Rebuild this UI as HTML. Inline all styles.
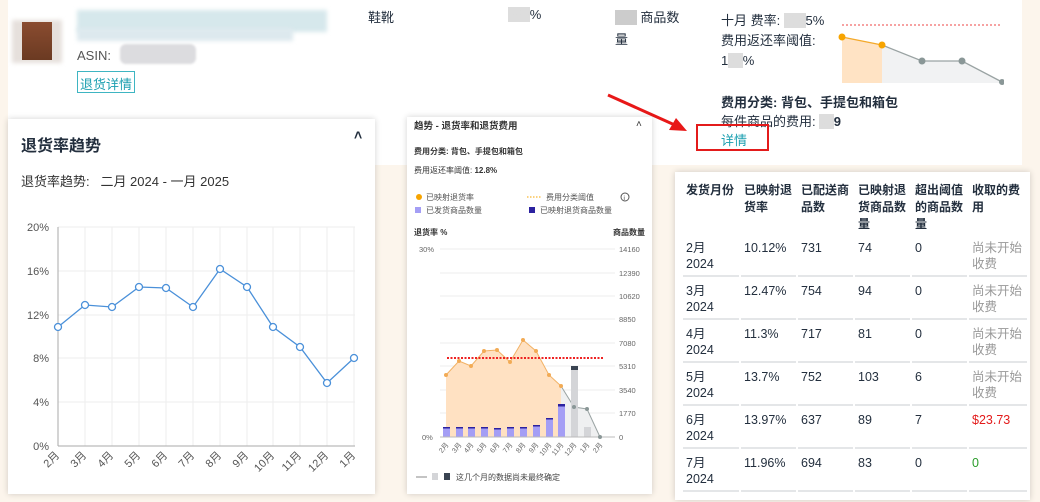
<!DOCTYPE html><html><head><meta charset="utf-8"><style>
*{margin:0;padding:0;box-sizing:border-box}
html,body{width:1040px;height:502px;overflow:hidden}
body{background:#fcf5ec;font-family:"Liberation Sans","Noto Sans CJK SC",sans-serif;color:#232f3e;position:relative}
.a{position:absolute;white-space:nowrap}
.t{font-size:13px}
.card{position:absolute;background:#fff;box-shadow:0 0 6px rgba(0,0,0,.18)}
table{border-collapse:separate;border-spacing:2px 0;font-size:12.5px;table-layout:fixed;width:340px}
td,th{vertical-align:top;text-align:left;padding:0 3px;line-height:17px;word-break:break-all}
th{font-weight:bold;font-size:12px;height:62px;padding-top:10px}
td{border-bottom:2px solid #e4e6e8;height:43px;padding-top:6px;line-height:16px}
.g{color:#999}
</style></head><body>
<div class="a" style="left:8px;top:0;width:1014px;height:165px;background:#fff"></div>
<div class="a" style="left:12px;top:20px;width:50px;height:43px;background:#e6e0dc;filter:blur(2px)"></div>
<div class="a" style="left:22px;top:22px;width:30px;height:38px;background:linear-gradient(#8a4c30,#6b3a22)"></div>
<div class="a" style="left:77px;top:10px;width:250px;height:22px;background:#d6e8ec;filter:blur(2px)"></div>
<div class="a" style="left:77px;top:28px;width:216px;height:13px;background:#dde9ee;filter:blur(2px)"></div>
<div class="a t" style="left:77px;top:48px;color:#555">ASIN:</div>
<div class="a" style="left:120px;top:44px;width:76px;height:20px;background:#dcdcdf;border-radius:6px;filter:blur(1px)"></div>
<div class="a" style="left:77px;top:71px;height:22px;border:1px solid #3eb5c2;color:#1b9fb0;font-size:13px;padding:2px 2px">退货详情</div>
<div class="a t" style="left:368px;top:7px">鞋靴</div>
<div class="a t" style="left:508px;top:7px"><span style="background:#ddd;color:#ddd">888</span>%</div>
<div class="a t" style="left:615px;top:7px;line-height:22px"><span style="background:#ccc;color:#ccc">888</span> 商品数<br>量</div>
<div class="a t" style="left:721px;top:11px;line-height:20px">十月 费率: <span style="background:#ddd;color:#ddd">888</span>5%<br>费用返还率阈值:<br>1<span style="background:#ddd;color:#ddd">88</span>%</div>
<svg class="a" style="left:838px;top:20px" width="166" height="66">
<line x1="4" y1="5" x2="164" y2="5" stroke="#e44" stroke-dasharray="2 2"/>
<polygon points="4,17 44,25 84,41 124,41 164,62 164,63 4,63" fill="#f1f2f3"/>
<polygon points="4,17 44,25 44,63 4,63" fill="#ffe3c4"/>
<polyline points="4,17 44,25" stroke="#f4a92a" fill="none" stroke-width="1.3"/>
<polyline points="44,25 84,41 124,41 164,62" stroke="#9aa3a3" fill="none" stroke-width="1.3"/>
<circle cx="4" cy="17" r="3.5" fill="#f7a400"/><circle cx="44" cy="25" r="3.5" fill="#f7a400"/>
<circle cx="84" cy="41" r="3.5" fill="#8a9797"/><circle cx="124" cy="41" r="3.5" fill="#8a9797"/><circle cx="164" cy="62" r="3" fill="#8a9797"/>
</svg>
<div class="a t" style="left:721px;top:93px;line-height:19px;font-weight:bold">费用分类: 背包、手提包和箱包<br><span style="font-weight:normal">每件商品的费用: </span><span style="background:#ddd;color:#ddd">88</span>9</div>
<div class="a" style="left:721px;top:130px;color:#1b9fb0;font-size:13px">详情</div>
<div class="a" style="left:696px;top:124px;width:73px;height:27px;border:2px solid #e31b1b"></div>
<svg class="a" style="left:605px;top:92px" width="90" height="45"><line x1="3" y1="3" x2="72" y2="34" stroke="#e81818" stroke-width="3"/><polygon points="82,39 64,38 71,26" fill="#e81818"/></svg>

<div class="card" style="left:8px;top:119px;width:367px;height:375px">
<div class="a" style="left:13px;top:13px;font-size:16px;font-weight:bold">退货率趋势</div>
<div class="a" style="left:346px;top:8px;font-size:14px;font-weight:bold">˄</div>
<div class="a t" style="left:13px;top:52px;color:#333">退货率趋势:&nbsp;&nbsp; 二月 2024 - 一月 2025</div>
</div>
<svg class="a" style="left:0;top:0" width="380" height="500" font-family="Liberation Sans" font-size="11" fill="#555">
<g stroke="#eee">
<line x1="58" y1="227" x2="355" y2="227"/><line x1="58" y1="271" x2="355" y2="271"/><line x1="58" y1="315" x2="355" y2="315"/><line x1="58" y1="358" x2="355" y2="358"/><line x1="58" y1="402" x2="355" y2="402"/>
<line x1="85" y1="227" x2="85" y2="446"/><line x1="112" y1="227" x2="112" y2="446"/><line x1="139" y1="227" x2="139" y2="446"/><line x1="166" y1="227" x2="166" y2="446"/><line x1="193" y1="227" x2="193" y2="446"/><line x1="220" y1="227" x2="220" y2="446"/><line x1="247" y1="227" x2="247" y2="446"/><line x1="273" y1="227" x2="273" y2="446"/><line x1="300" y1="227" x2="300" y2="446"/><line x1="327" y1="227" x2="327" y2="446"/><line x1="354" y1="227" x2="354" y2="446"/></g>
<line x1="58" y1="227" x2="58" y2="446" stroke="#aaa"/><line x1="58" y1="446" x2="355" y2="446" stroke="#aaa"/>
<g text-anchor="end"><text x="49" y="231">20%</text><text x="49" y="275">16%</text><text x="49" y="319">12%</text><text x="49" y="362">8%</text><text x="49" y="406">4%</text><text x="49" y="450">0%</text></g>
<polyline fill="none" stroke="#4a90d9" stroke-width="1.3" points="58,327 85,305 112,307 139,287 166,288 193,307 220,269 247,287 273,327 300,347 327,383 354,358"/>
<g fill="#fff" stroke="#4a90d9" stroke-width="1.3"><circle cx="58" cy="327" r="3.5"/><circle cx="85" cy="305" r="3.5"/><circle cx="112" cy="307" r="3.5"/><circle cx="139" cy="287" r="3.5"/><circle cx="166" cy="288" r="3.5"/><circle cx="193" cy="307" r="3.5"/><circle cx="220" cy="269" r="3.5"/><circle cx="247" cy="287" r="3.5"/><circle cx="273" cy="327" r="3.5"/><circle cx="300" cy="347" r="3.5"/><circle cx="327" cy="383" r="3.5"/><circle cx="354" cy="358" r="3.5"/></g>
<g text-anchor="end"><text transform="translate(60,456) rotate(-45)">2月</text><text transform="translate(87,456) rotate(-45)">3月</text><text transform="translate(114,456) rotate(-45)">4月</text><text transform="translate(141,456) rotate(-45)">5月</text><text transform="translate(168,456) rotate(-45)">6月</text><text transform="translate(195,456) rotate(-45)">7月</text><text transform="translate(222,456) rotate(-45)">8月</text><text transform="translate(249,456) rotate(-45)">9月</text><text transform="translate(275,456) rotate(-45)">10月</text><text transform="translate(302,456) rotate(-45)">11月</text><text transform="translate(329,456) rotate(-45)">12月</text><text transform="translate(356,456) rotate(-45)">1月</text></g>
</svg>

<div class="card" style="left:407px;top:117px;width:245px;height:377px"></div>
<svg class="a" style="left:407px;top:117px" width="245" height="377" font-family="Liberation Sans,Noto Sans CJK SC" font-size="8" fill="#333">
<text x="7" y="12" font-size="9.5" font-weight="bold">趋势 - 退货率和退货费用</text><text x="229" y="10" font-size="10">˄</text>
<text x="7" y="37" font-weight="bold">费用分类: 背包、手提包和箱包</text>
<text x="7" y="56">费用返还率阈值: <tspan font-weight="bold">12.8%</tspan></text>
<circle cx="12" cy="80" r="3" fill="#f7a400"/><text x="19" y="83" fill="#555">已映射退货率</text>
<line x1="120" y1="80" x2="134" y2="80" stroke="#f7a400" stroke-dasharray="1.5 1.5"/><text x="139" y="83" fill="#555">费用分类阈值</text>
<circle cx="218" cy="80" r="4" fill="none" stroke="#555"/><text x="216.5" y="83" font-size="6">i</text>
<rect x="8" y="90" width="6" height="6" fill="#a49ef5"/><text x="19" y="96" fill="#555">已发货商品数量</text>
<rect x="122" y="90" width="6" height="6" fill="#2c22a0"/><text x="133" y="96" fill="#555">已映射退货商品数量</text>
<text x="7" y="118" font-weight="bold">退货率 %</text><text x="238" y="118" font-weight="bold" text-anchor="end">商品数量</text>
<g stroke="#eee"><line x1="33" y1="132" x2="208" y2="132"/><line x1="33" y1="156" x2="208" y2="156"/><line x1="33" y1="179" x2="208" y2="179"/><line x1="33" y1="202" x2="208" y2="202"/><line x1="33" y1="226" x2="208" y2="226"/><line x1="33" y1="249" x2="208" y2="249"/><line x1="33" y1="273" x2="208" y2="273"/><line x1="33" y1="296" x2="208" y2="296"/></g>
<g fill="#666" font-size="7.5"><text x="12" y="135">30%</text><text x="15" y="323">0%</text>
<text x="212" y="135">14160</text><text x="212" y="159">12390</text><text x="212" y="182">10620</text><text x="212" y="205">8850</text><text x="212" y="229">7080</text><text x="212" y="252">5310</text><text x="212" y="276">3540</text><text x="212" y="299">1770</text><text x="212" y="323">0</text></g>
<polygon points="154,269 167,290 180,292 193,320 193,320 154,320" fill="#eff0f1"/>
<polygon points="39,258 52,244 64,249 77,234 90,233 103,245 116,223 129,234 142,258 154,269 154,320 39,320" fill="#ffe1c2"/>
<polyline fill="none" stroke="#f2b266" points="39,258 52,244 64,249 77,234 90,233 103,245 116,223 129,234 142,258 154,269"/>
<polyline fill="none" stroke="#9aa3a3" points="154,269 167,290 180,292 193,320"/>
<line x1="40" y1="241" x2="197" y2="241" stroke="#e22" stroke-width="2" stroke-dasharray="2 1.5"/>
<g fill="#a49ef5"><rect x="36" y="311" width="7" height="9"/><rect x="49" y="311" width="7" height="9"/><rect x="61" y="311" width="7" height="9"/><rect x="74" y="311" width="7" height="9"/><rect x="87" y="312" width="7" height="8"/><rect x="100" y="311" width="7" height="9"/><rect x="113" y="311" width="7" height="9"/><rect x="126" y="309" width="7" height="11"/><rect x="139" y="302" width="7" height="18"/><rect x="151" y="289" width="7" height="31"/></g>
<g fill="#2c22a0"><rect x="36" y="310" width="7" height="1.5"/><rect x="49" y="310" width="7" height="1.5"/><rect x="61" y="310" width="7" height="1.5"/><rect x="74" y="310" width="7" height="1.5"/><rect x="87" y="311" width="7" height="1.5"/><rect x="100" y="310" width="7" height="1.5"/><rect x="113" y="310" width="7" height="1.5"/><rect x="126" y="308" width="7" height="1.5"/><rect x="139" y="301" width="7" height="1.5"/><rect x="151" y="287" width="7" height="2.5"/></g>
<rect x="164" y="250" width="7" height="70" fill="#d4d5d8"/><rect x="164" y="249" width="7" height="4" fill="#3a4452"/>
<rect x="177" y="310" width="7" height="10" fill="#d4d5d8"/>
<line x1="33" y1="320" x2="208" y2="320" stroke="#bbb"/>
<g fill="#f2ab55"><circle cx="39" cy="258" r="2"/><circle cx="52" cy="244" r="2"/><circle cx="64" cy="249" r="2"/><circle cx="77" cy="234" r="2"/><circle cx="90" cy="233" r="2"/><circle cx="103" cy="245" r="2"/><circle cx="116" cy="223" r="2"/><circle cx="129" cy="234" r="2"/><circle cx="142" cy="258" r="2"/><circle cx="154" cy="269" r="2"/></g>
<g fill="#8a9797"><circle cx="167" cy="290" r="2"/><circle cx="180" cy="292" r="2"/><circle cx="193" cy="320" r="2"/></g>
<g fill="#666" font-size="7" text-anchor="end"><text transform="translate(42,328) rotate(-50)">2月</text><text transform="translate(55,328) rotate(-50)">3月</text><text transform="translate(67,328) rotate(-50)">4月</text><text transform="translate(80,328) rotate(-50)">5月</text><text transform="translate(93,328) rotate(-50)">6月</text><text transform="translate(106,328) rotate(-50)">7月</text><text transform="translate(119,328) rotate(-50)">8月</text><text transform="translate(132,328) rotate(-50)">9月</text><text transform="translate(145,328) rotate(-50)">10月</text><text transform="translate(157,328) rotate(-50)">11月</text><text transform="translate(170,328) rotate(-50)">12月</text><text transform="translate(183,328) rotate(-50)">1月</text><text transform="translate(196,328) rotate(-50)">2月</text></g>
<line x1="9" y1="360" x2="20" y2="360" stroke="#888"/><rect x="25" y="356" width="6" height="7" fill="#d4d5d8"/><rect x="37" y="356" width="6" height="7" fill="#3a4452"/>
<text x="49" y="363" fill="#444">这几个月的数据尚未最终确定</text>
</svg>

<div class="card" style="left:675px;top:172px;width:355px;height:328px;padding-left:6px;overflow:hidden">
<table>
<colgroup><col style="width:56px"><col style="width:55px"><col style="width:55px"><col style="width:55px"><col style="width:55px"><col style="width:58px"></colgroup>
<tr><th>发货月份</th><th>已映射退货率</th><th>已配送商品数</th><th>已映射退货商品数量</th><th>超出阈值的商品数量</th><th>收取的费用</th></tr>
<tr><td>2月<br>2024</td><td>10.12%</td><td>731</td><td>74</td><td>0</td><td class="g">尚未开始收费</td></tr>
<tr><td>3月<br>2024</td><td>12.47%</td><td>754</td><td>94</td><td>0</td><td class="g">尚未开始收费</td></tr>
<tr><td>4月<br>2024</td><td>11.3%</td><td>717</td><td>81</td><td>0</td><td class="g">尚未开始收费</td></tr>
<tr><td>5月<br>2024</td><td>13.7%</td><td>752</td><td>103</td><td>6</td><td class="g">尚未开始收费</td></tr>
<tr><td>6月<br>2024</td><td>13.97%</td><td>637</td><td>89</td><td>7</td><td style="color:#e31b1b">$23.73</td></tr>
<tr><td>7月<br>2024</td><td>11.96%</td><td>694</td><td>83</td><td>0</td><td style="color:#2a9d2a">0</td></tr>
</table></div>
</body></html>
